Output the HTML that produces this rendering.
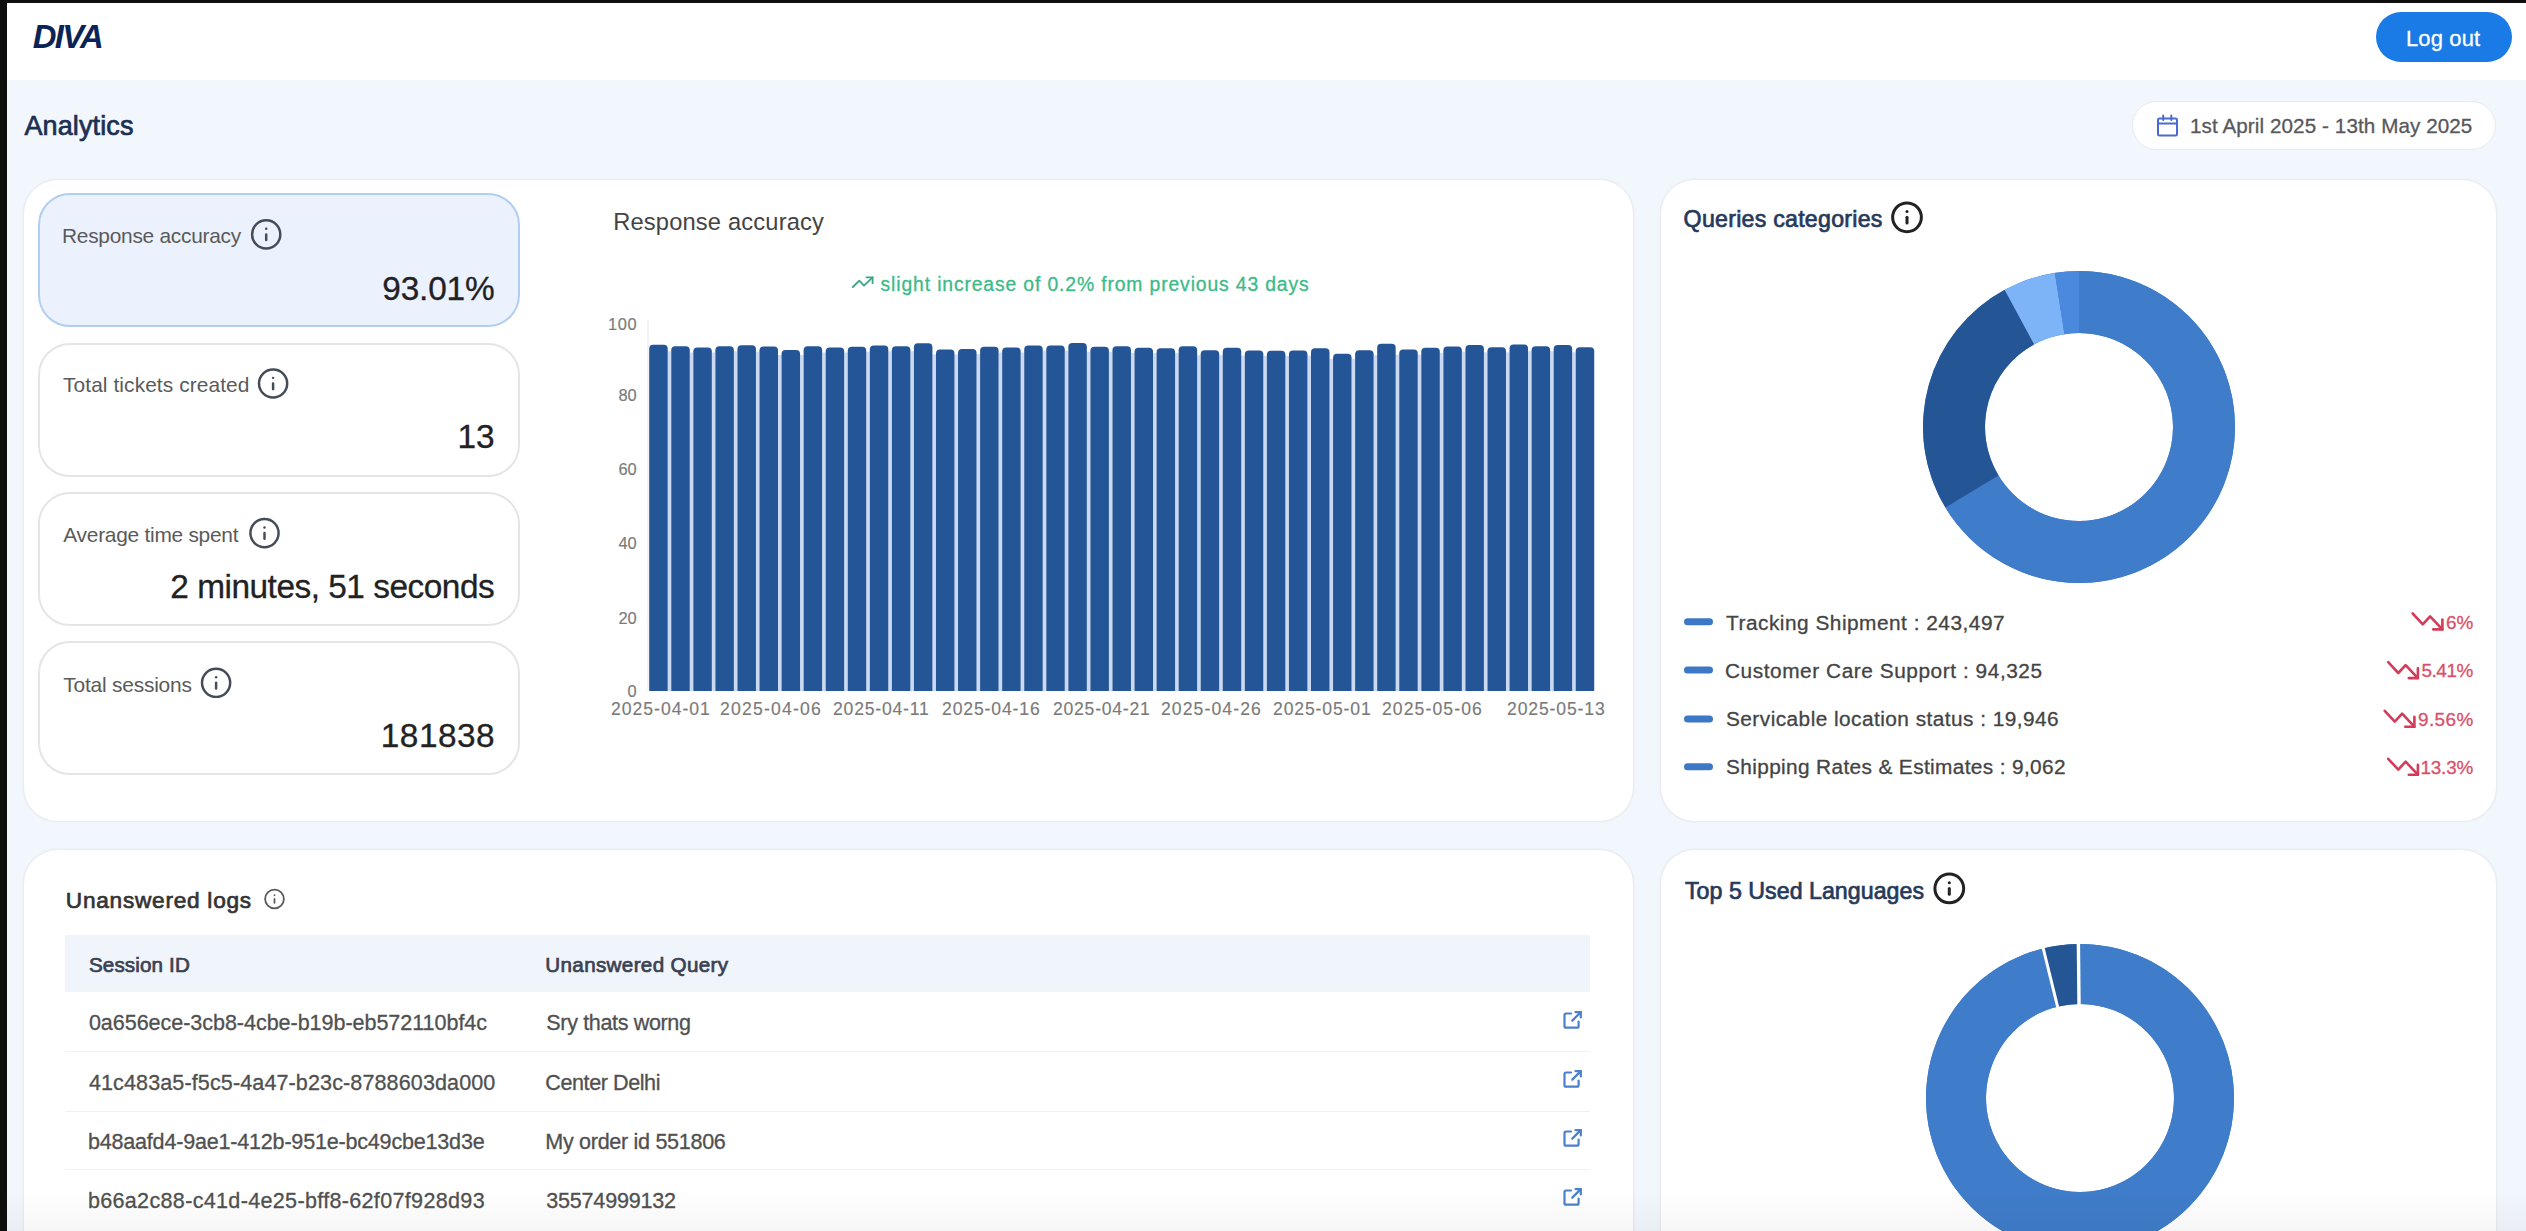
<!DOCTYPE html>
<html><head><meta charset="utf-8">
<style>
*{box-sizing:border-box;margin:0;padding:0}
html,body{width:2526px;height:1231px;overflow:hidden}
body{position:relative;background:#f2f6fd;font-family:"Liberation Sans",sans-serif;color:#333}
.abs{position:absolute}
.card{position:absolute;background:#fff;border:1px solid #e9ecf0;border-radius:35px;box-shadow:0 0 3px rgba(0,0,0,0.05)}
.metric{position:absolute;left:38px;width:482px;border:2px solid #e4e5e8;border-radius:32px;background:#fff}
.metric.sel{background:#ebf2fd;border-color:#b3cdf1}
svg{position:absolute;left:0;top:0}
svg text{font-family:"Liberation Sans",sans-serif}
</style></head><body>
<div class="abs" style="left:7px;top:3px;width:2519px;height:77px;background:#fff"></div>
<div class="abs" style="left:2376px;top:12px;width:136px;height:50px;border-radius:25px;background:#1a7ae6"></div>
<div class="abs" style="left:2132px;top:101px;width:364px;height:49px;border-radius:25px;background:#fff;border:1px solid #e6e9ee"></div>
<div class="card" style="left:23px;top:179px;width:1611px;height:643px"></div>
<div class="card" style="left:1660px;top:179px;width:837px;height:643px"></div>
<div class="card" style="left:23px;top:849px;width:1611px;height:420px"></div>
<div class="card" style="left:1660px;top:849px;width:837px;height:420px"></div>
<div class="metric sel" style="top:193px;height:134px"></div>
<div class="metric" style="top:343px;height:134px"></div>
<div class="metric" style="top:492px;height:134px"></div>
<div class="metric" style="top:641px;height:134px"></div>
<div class="abs" style="left:65px;top:935px;width:1525px;height:57px;background:#f0f4fb"></div>
<div class="abs" style="left:65px;top:1051px;width:1525px;height:1px;background:#eff1f4"></div>
<div class="abs" style="left:65px;top:1111px;width:1525px;height:1px;background:#eff1f4"></div>
<div class="abs" style="left:65px;top:1169px;width:1525px;height:1px;background:#eff1f4"></div>
<svg width="2526" height="1231" viewBox="0 0 2526 1231">
<line x1="648" y1="320" x2="648" y2="691" stroke="#e8e8e8" stroke-width="1"/>
<g fill="#cbdaf2">
<rect x="667.70" y="351.20" width="3.56" height="339.80"/>
<rect x="689.76" y="352.50" width="3.56" height="338.50"/>
<rect x="711.82" y="352.50" width="3.56" height="338.50"/>
<rect x="733.88" y="351.20" width="3.56" height="339.80"/>
<rect x="755.94" y="351.50" width="3.56" height="339.50"/>
<rect x="778.00" y="355.00" width="3.56" height="336.00"/>
<rect x="800.06" y="355.00" width="3.56" height="336.00"/>
<rect x="822.12" y="352.50" width="3.56" height="338.50"/>
<rect x="844.18" y="352.50" width="3.56" height="338.50"/>
<rect x="866.24" y="351.70" width="3.56" height="339.30"/>
<rect x="888.30" y="351.20" width="3.56" height="339.80"/>
<rect x="910.36" y="351.20" width="3.56" height="339.80"/>
<rect x="932.42" y="354.40" width="3.56" height="336.60"/>
<rect x="954.48" y="354.40" width="3.56" height="336.60"/>
<rect x="976.54" y="354.00" width="3.56" height="337.00"/>
<rect x="998.60" y="352.50" width="3.56" height="338.50"/>
<rect x="1020.66" y="352.50" width="3.56" height="338.50"/>
<rect x="1042.72" y="350.60" width="3.56" height="340.40"/>
<rect x="1064.78" y="350.60" width="3.56" height="340.40"/>
<rect x="1086.84" y="351.70" width="3.56" height="339.30"/>
<rect x="1108.90" y="351.70" width="3.56" height="339.30"/>
<rect x="1130.96" y="352.80" width="3.56" height="338.20"/>
<rect x="1153.02" y="353.20" width="3.56" height="337.80"/>
<rect x="1175.08" y="353.20" width="3.56" height="337.80"/>
<rect x="1197.14" y="355.20" width="3.56" height="335.80"/>
<rect x="1219.20" y="355.20" width="3.56" height="335.80"/>
<rect x="1241.26" y="355.60" width="3.56" height="335.40"/>
<rect x="1263.32" y="355.80" width="3.56" height="335.20"/>
<rect x="1285.38" y="355.80" width="3.56" height="335.20"/>
<rect x="1307.44" y="355.60" width="3.56" height="335.40"/>
<rect x="1329.50" y="358.80" width="3.56" height="332.20"/>
<rect x="1351.56" y="358.80" width="3.56" height="332.20"/>
<rect x="1373.62" y="355.20" width="3.56" height="335.80"/>
<rect x="1395.68" y="354.60" width="3.56" height="336.40"/>
<rect x="1417.74" y="354.60" width="3.56" height="336.40"/>
<rect x="1439.80" y="352.80" width="3.56" height="338.20"/>
<rect x="1461.86" y="351.60" width="3.56" height="339.40"/>
<rect x="1483.92" y="352.20" width="3.56" height="338.80"/>
<rect x="1505.98" y="352.20" width="3.56" height="338.80"/>
<rect x="1528.04" y="351.20" width="3.56" height="339.80"/>
<rect x="1550.10" y="351.20" width="3.56" height="339.80"/>
<rect x="1572.16" y="352.20" width="3.56" height="338.80"/>
</g>
<g fill="#245596">
<path d="M649.20 691 V348.80 Q649.20 344.80 653.20 344.80 H663.70 Q667.70 344.80 667.70 348.80 V691 Z"/>
<path d="M671.26 691 V350.20 Q671.26 346.20 675.26 346.20 H685.76 Q689.76 346.20 689.76 350.20 V691 Z"/>
<path d="M693.32 691 V351.50 Q693.32 347.50 697.32 347.50 H707.82 Q711.82 347.50 711.82 351.50 V691 Z"/>
<path d="M715.38 691 V350.20 Q715.38 346.20 719.38 346.20 H729.88 Q733.88 346.20 733.88 350.20 V691 Z"/>
<path d="M737.44 691 V349.20 Q737.44 345.20 741.44 345.20 H751.94 Q755.94 345.20 755.94 349.20 V691 Z"/>
<path d="M759.50 691 V350.50 Q759.50 346.50 763.50 346.50 H774.00 Q778.00 346.50 778.00 350.50 V691 Z"/>
<path d="M781.56 691 V354.00 Q781.56 350.00 785.56 350.00 H796.06 Q800.06 350.00 800.06 354.00 V691 Z"/>
<path d="M803.62 691 V350.20 Q803.62 346.20 807.62 346.20 H818.12 Q822.12 346.20 822.12 350.20 V691 Z"/>
<path d="M825.68 691 V351.50 Q825.68 347.50 829.68 347.50 H840.18 Q844.18 347.50 844.18 351.50 V691 Z"/>
<path d="M847.74 691 V350.70 Q847.74 346.70 851.74 346.70 H862.24 Q866.24 346.70 866.24 350.70 V691 Z"/>
<path d="M869.80 691 V349.60 Q869.80 345.60 873.80 345.60 H884.30 Q888.30 345.60 888.30 349.60 V691 Z"/>
<path d="M891.86 691 V350.20 Q891.86 346.20 895.86 346.20 H906.36 Q910.36 346.20 910.36 350.20 V691 Z"/>
<path d="M913.92 691 V347.30 Q913.92 343.30 917.92 343.30 H928.42 Q932.42 343.30 932.42 347.30 V691 Z"/>
<path d="M935.98 691 V353.40 Q935.98 349.40 939.98 349.40 H950.48 Q954.48 349.40 954.48 353.40 V691 Z"/>
<path d="M958.04 691 V353.00 Q958.04 349.00 962.04 349.00 H972.54 Q976.54 349.00 976.54 353.00 V691 Z"/>
<path d="M980.10 691 V350.70 Q980.10 346.70 984.10 346.70 H994.60 Q998.60 346.70 998.60 350.70 V691 Z"/>
<path d="M1002.16 691 V351.50 Q1002.16 347.50 1006.16 347.50 H1016.66 Q1020.66 347.50 1020.66 351.50 V691 Z"/>
<path d="M1024.22 691 V349.60 Q1024.22 345.60 1028.22 345.60 H1038.72 Q1042.72 345.60 1042.72 349.60 V691 Z"/>
<path d="M1046.28 691 V349.60 Q1046.28 345.60 1050.28 345.60 H1060.78 Q1064.78 345.60 1064.78 349.60 V691 Z"/>
<path d="M1068.34 691 V346.90 Q1068.34 342.90 1072.34 342.90 H1082.84 Q1086.84 342.90 1086.84 346.90 V691 Z"/>
<path d="M1090.40 691 V350.70 Q1090.40 346.70 1094.40 346.70 H1104.90 Q1108.90 346.70 1108.90 350.70 V691 Z"/>
<path d="M1112.46 691 V350.20 Q1112.46 346.20 1116.46 346.20 H1126.96 Q1130.96 346.20 1130.96 350.20 V691 Z"/>
<path d="M1134.52 691 V351.80 Q1134.52 347.80 1138.52 347.80 H1149.02 Q1153.02 347.80 1153.02 351.80 V691 Z"/>
<path d="M1156.58 691 V352.20 Q1156.58 348.20 1160.58 348.20 H1171.08 Q1175.08 348.20 1175.08 352.20 V691 Z"/>
<path d="M1178.64 691 V350.20 Q1178.64 346.20 1182.64 346.20 H1193.14 Q1197.14 346.20 1197.14 350.20 V691 Z"/>
<path d="M1200.70 691 V354.20 Q1200.70 350.20 1204.70 350.20 H1215.20 Q1219.20 350.20 1219.20 354.20 V691 Z"/>
<path d="M1222.76 691 V351.80 Q1222.76 347.80 1226.76 347.80 H1237.26 Q1241.26 347.80 1241.26 351.80 V691 Z"/>
<path d="M1244.82 691 V354.60 Q1244.82 350.60 1248.82 350.60 H1259.32 Q1263.32 350.60 1263.32 354.60 V691 Z"/>
<path d="M1266.88 691 V354.80 Q1266.88 350.80 1270.88 350.80 H1281.38 Q1285.38 350.80 1285.38 354.80 V691 Z"/>
<path d="M1288.94 691 V354.60 Q1288.94 350.60 1292.94 350.60 H1303.44 Q1307.44 350.60 1307.44 354.60 V691 Z"/>
<path d="M1311.00 691 V352.20 Q1311.00 348.20 1315.00 348.20 H1325.50 Q1329.50 348.20 1329.50 352.20 V691 Z"/>
<path d="M1333.06 691 V357.80 Q1333.06 353.80 1337.06 353.80 H1347.56 Q1351.56 353.80 1351.56 357.80 V691 Z"/>
<path d="M1355.12 691 V354.20 Q1355.12 350.20 1359.12 350.20 H1369.62 Q1373.62 350.20 1373.62 354.20 V691 Z"/>
<path d="M1377.18 691 V347.70 Q1377.18 343.70 1381.18 343.70 H1391.68 Q1395.68 343.70 1395.68 347.70 V691 Z"/>
<path d="M1399.24 691 V353.60 Q1399.24 349.60 1403.24 349.60 H1413.74 Q1417.74 349.60 1417.74 353.60 V691 Z"/>
<path d="M1421.30 691 V351.80 Q1421.30 347.80 1425.30 347.80 H1435.80 Q1439.80 347.80 1439.80 351.80 V691 Z"/>
<path d="M1443.36 691 V350.60 Q1443.36 346.60 1447.36 346.60 H1457.86 Q1461.86 346.60 1461.86 350.60 V691 Z"/>
<path d="M1465.42 691 V349.10 Q1465.42 345.10 1469.42 345.10 H1479.92 Q1483.92 345.10 1483.92 349.10 V691 Z"/>
<path d="M1487.48 691 V351.20 Q1487.48 347.20 1491.48 347.20 H1501.98 Q1505.98 347.20 1505.98 351.20 V691 Z"/>
<path d="M1509.54 691 V348.50 Q1509.54 344.50 1513.54 344.50 H1524.04 Q1528.04 344.50 1528.04 348.50 V691 Z"/>
<path d="M1531.60 691 V350.20 Q1531.60 346.20 1535.60 346.20 H1546.10 Q1550.10 346.20 1550.10 350.20 V691 Z"/>
<path d="M1553.66 691 V349.10 Q1553.66 345.10 1557.66 345.10 H1568.16 Q1572.16 345.10 1572.16 349.10 V691 Z"/>
<path d="M1575.72 691 V351.20 Q1575.72 347.20 1579.72 347.20 H1590.22 Q1594.22 347.20 1594.22 351.20 V691 Z"/>
</g>
<circle cx="2079" cy="427" r="125" fill="none" stroke="#3f7cc9" stroke-width="62"/>
<path fill="#3f7cc9" d="M2079.00 271.00 A156 156 0 1 1 1945.33 507.43 L1998.46 475.47 A94 94 0 1 0 2079.00 333.00 Z"/>
<path fill="#245594" d="M1945.33 507.43 A156 156 0 0 1 2004.64 289.86 L2034.19 344.37 A94 94 0 0 0 1998.46 475.47 Z"/>
<path fill="#7db4f8" d="M2004.64 289.86 A156 156 0 0 1 2054.88 272.88 L2064.47 334.13 A94 94 0 0 0 2034.19 344.37 Z"/>
<path fill="#4a89de" d="M2054.88 272.88 A156 156 0 0 1 2079.00 271.00 L2079.00 333.00 A94 94 0 0 0 2064.47 334.13 Z"/>
<circle cx="2080" cy="1098" r="124" fill="none" stroke="#3f7cc9" stroke-width="60"/>
<path fill="#3f7cc9" d="M2080.00 944.00 A154 154 0 1 1 2042.74 948.57 L2057.26 1006.79 A94 94 0 1 0 2080.00 1004.00 Z"/>
<path fill="#245594" d="M2042.74 948.57 A154 154 0 0 1 2078.66 944.01 L2079.18 1004.00 A94 94 0 0 0 2057.26 1006.79 Z"/>
<line x1="2058.05" y1="1008.66" x2="2042.79" y2="946.50" stroke="#fff" stroke-width="3.0"/>
<line x1="2079.04" y1="1006.01" x2="2078.37" y2="942.01" stroke="#fff" stroke-width="3.4"/>
<g transform="translate(249.30 217.50) scale(1.4083)" fill="none" stroke="#454c58" stroke-width="1.75" stroke-linecap="round" stroke-linejoin="round"><circle cx="12" cy="12" r="10"/><path d="M12 16v-4"/><path d="M12 8h.01"/></g>
<g transform="translate(256.20 366.60) scale(1.4083)" fill="none" stroke="#454c58" stroke-width="1.75" stroke-linecap="round" stroke-linejoin="round"><circle cx="12" cy="12" r="10"/><path d="M12 16v-4"/><path d="M12 8h.01"/></g>
<g transform="translate(247.60 516.20) scale(1.4083)" fill="none" stroke="#454c58" stroke-width="1.75" stroke-linecap="round" stroke-linejoin="round"><circle cx="12" cy="12" r="10"/><path d="M12 16v-4"/><path d="M12 8h.01"/></g>
<g transform="translate(199.20 665.90) scale(1.4083)" fill="none" stroke="#454c58" stroke-width="1.75" stroke-linecap="round" stroke-linejoin="round"><circle cx="12" cy="12" r="10"/><path d="M12 16v-4"/><path d="M12 8h.01"/></g>
<g transform="translate(1889.75 200.05) scale(1.4375)" fill="none" stroke="#222" stroke-width="2.1" stroke-linecap="round" stroke-linejoin="round"><circle cx="12" cy="12" r="10"/><path d="M12 16v-4"/><path d="M12 8h.01"/></g>
<g transform="translate(1932.05 871.15) scale(1.4375)" fill="none" stroke="#222" stroke-width="2.1" stroke-linecap="round" stroke-linejoin="round"><circle cx="12" cy="12" r="10"/><path d="M12 16v-4"/><path d="M12 8h.01"/></g>
<g transform="translate(263.25 887.75) scale(0.9375)" fill="none" stroke="#5a5a5a" stroke-width="1.9" stroke-linecap="round" stroke-linejoin="round"><circle cx="12" cy="12" r="10"/><path d="M12 16v-4"/><path d="M12 8h.01"/></g>
<g fill="none" stroke="#4b6bd0" stroke-width="2" stroke-linecap="round"><rect x="2158" y="118.4" width="19" height="17" rx="1.5"/><line x1="2158" y1="123.6" x2="2177" y2="123.6"/><line x1="2163.2" y1="115.5" x2="2163.2" y2="120"/><line x1="2171.3" y1="115.5" x2="2171.3" y2="120"/></g>
<g fill="none" stroke="#3fa581" stroke-width="1.8" stroke-linecap="round" stroke-linejoin="round"><polyline points="852.8,287 859.3,280.6 864,285.6 872.6,277.3"/><polyline points="866.4,277.3 872.6,277.3 872.6,283.2"/></g>
<g fill="none" stroke="#d23c5a" stroke-width="2.6" stroke-linecap="round" stroke-linejoin="round"><polyline points="2412.7,613.5 2422.8,624.3 2430.1,616.4 2442.4,629.4"/><polyline points="2433.3,629.4 2442.4,629.4 2442.4,619.6"/></g>
<g fill="none" stroke="#d23c5a" stroke-width="2.6" stroke-linecap="round" stroke-linejoin="round"><polyline points="2388.2,662.2 2398.3,673.0 2405.6,665.1 2417.9,678.1"/><polyline points="2408.8,678.1 2417.9,678.1 2417.9,668.3"/></g>
<g fill="none" stroke="#d23c5a" stroke-width="2.6" stroke-linecap="round" stroke-linejoin="round"><polyline points="2384.7,710.8 2394.8,721.6 2402.1,713.7 2414.4,726.7"/><polyline points="2405.3,726.7 2414.4,726.7 2414.4,716.9"/></g>
<g fill="none" stroke="#d23c5a" stroke-width="2.6" stroke-linecap="round" stroke-linejoin="round"><polyline points="2388.2,758.8 2398.3,769.6 2405.6,761.7 2417.9,774.7"/><polyline points="2408.8,774.7 2417.9,774.7 2417.9,764.9"/></g>
<line x1="1687.5" y1="621.7" x2="1709.5" y2="621.7" stroke="#3d78c6" stroke-width="7" stroke-linecap="round"/>
<line x1="1687.5" y1="670" x2="1709.5" y2="670" stroke="#3d78c6" stroke-width="7" stroke-linecap="round"/>
<line x1="1687.5" y1="719" x2="1709.5" y2="719" stroke="#3d78c6" stroke-width="7" stroke-linecap="round"/>
<line x1="1687.5" y1="766.8" x2="1709.5" y2="766.8" stroke="#3d78c6" stroke-width="7" stroke-linecap="round"/>
<g fill="none" stroke="#4a80cc" stroke-width="2.2" stroke-linecap="round" stroke-linejoin="round"><path d="M1571.0 1013.5 H1566.0 Q1564.5 1013.5 1564.5 1015.0 V1026.2 Q1564.5 1027.7 1566.0 1027.7 H1577.1 Q1578.6 1027.7 1578.6 1026.2 V1021.5"/><path d="M1572.3 1020.6 L1580.8 1012.1"/><path d="M1575.5 1012.1 H1580.8 V1017.4"/></g>
<g fill="none" stroke="#4a80cc" stroke-width="2.2" stroke-linecap="round" stroke-linejoin="round"><path d="M1571.0 1072.5 H1566.0 Q1564.5 1072.5 1564.5 1074.0 V1085.2 Q1564.5 1086.7 1566.0 1086.7 H1577.1 Q1578.6 1086.7 1578.6 1085.2 V1080.5"/><path d="M1572.3 1079.6 L1580.8 1071.1"/><path d="M1575.5 1071.1 H1580.8 V1076.4"/></g>
<g fill="none" stroke="#4a80cc" stroke-width="2.2" stroke-linecap="round" stroke-linejoin="round"><path d="M1571.0 1131.5 H1566.0 Q1564.5 1131.5 1564.5 1133.0 V1144.2 Q1564.5 1145.7 1566.0 1145.7 H1577.1 Q1578.6 1145.7 1578.6 1144.2 V1139.5"/><path d="M1572.3 1138.6 L1580.8 1130.1"/><path d="M1575.5 1130.1 H1580.8 V1135.4"/></g>
<g fill="none" stroke="#4a80cc" stroke-width="2.2" stroke-linecap="round" stroke-linejoin="round"><path d="M1571.0 1190.5 H1566.0 Q1564.5 1190.5 1564.5 1192.0 V1203.2 Q1564.5 1204.7 1566.0 1204.7 H1577.1 Q1578.6 1204.7 1578.6 1203.2 V1198.5"/><path d="M1572.3 1197.6 L1580.8 1189.1"/><path d="M1575.5 1189.1 H1580.8 V1194.4"/></g>
<text x="32.70" y="47.90" fill="#0b2458" style="font-size:32.85px;font-weight:bold;font-style:italic;letter-spacing:-1.629px;">DIVA</text>
<text x="2406.00" y="45.50" fill="#ffffff" stroke="#ffffff" stroke-width="0.3" style="font-size:21.95px;letter-spacing:0.150px;">Log out</text>
<text x="24.40" y="135.00" fill="#1b2f52" stroke="#1b2f52" stroke-width="0.7" style="font-size:27.03px;letter-spacing:0.126px;">Analytics</text>
<text x="2190.00" y="133.20" fill="#58585c" stroke="#58585c" stroke-width="0.3" style="font-size:20.64px;letter-spacing:0.089px;">1st April 2025 - 13th May 2025</text>
<text x="62.00" y="243.00" fill="#5a5a5a" style="font-size:20.90px;letter-spacing:-0.270px;">Response accuracy</text>
<text x="63.00" y="392.10" fill="#5a5a5a" style="font-size:20.90px;letter-spacing:0.090px;">Total tickets created</text>
<text x="63.30" y="541.70" fill="#5a5a5a" style="font-size:20.90px;letter-spacing:-0.259px;">Average time spent</text>
<text x="63.30" y="691.50" fill="#5a5a5a" style="font-size:20.90px;letter-spacing:-0.205px;">Total sessions</text>
<text x="382.30" y="299.70" fill="#222222" stroke="#222222" stroke-width="0.3" style="font-size:33.40px;letter-spacing:-0.172px;">93.01%</text>
<text x="457.60" y="448.30" fill="#222222" stroke="#222222" stroke-width="0.3" style="font-size:33.40px;letter-spacing:-0.170px;">13</text>
<text x="170.30" y="597.90" fill="#222222" stroke="#222222" stroke-width="0.3" style="font-size:33.40px;letter-spacing:-0.485px;">2 minutes, 51 seconds</text>
<text x="380.80" y="747.00" fill="#222222" stroke="#222222" stroke-width="0.3" style="font-size:33.40px;letter-spacing:0.470px;">181838</text>
<text x="613.20" y="229.80" fill="#444444" style="font-size:23.69px;letter-spacing:0.170px;">Response accuracy</text>
<text x="880.60" y="290.70" fill="#3dba88" stroke="#3dba88" stroke-width="0.3" style="font-size:19.33px;letter-spacing:0.866px;">slight increase of 0.2% from previous 43 days</text>
<text x="607.90" y="330.00" fill="#7a7a7a" stroke="#7a7a7a" stroke-width="0.15" style="font-size:16.42px;letter-spacing:0.726px;">100</text>
<text x="1683.60" y="226.70" fill="#26395a" stroke="#26395a" stroke-width="0.7" style="font-size:23.20px;letter-spacing:0.246px;">Queries categories</text>
<text x="1726.00" y="629.70" fill="#444444" stroke="#444444" stroke-width="0.3" style="font-size:20.82px;letter-spacing:0.510px;">Tracking Shipment : 243,497</text>
<text x="1725.00" y="678.00" fill="#444444" stroke="#444444" stroke-width="0.3" style="font-size:20.82px;letter-spacing:0.562px;">Customer Care Support : 94,325</text>
<text x="1726.00" y="726.20" fill="#444444" stroke="#444444" stroke-width="0.3" style="font-size:20.82px;letter-spacing:0.458px;">Servicable location status : 19,946</text>
<text x="1726.00" y="774.30" fill="#444444" stroke="#444444" stroke-width="0.3" style="font-size:20.82px;letter-spacing:0.369px;">Shipping Rates &amp; Estimates : 9,062</text>
<text x="2445.90" y="629.00" fill="#d9506a" stroke="#d9506a" stroke-width="0.3" style="font-size:18.90px;letter-spacing:0.094px;">6%</text>
<text x="2421.40" y="677.00" fill="#d9506a" stroke="#d9506a" stroke-width="0.3" style="font-size:18.90px;letter-spacing:-0.417px;">5.41%</text>
<text x="2418.00" y="725.60" fill="#d9506a" stroke="#d9506a" stroke-width="0.3" style="font-size:18.90px;letter-spacing:0.433px;">9.56%</text>
<text x="2420.40" y="773.90" fill="#d9506a" stroke="#d9506a" stroke-width="0.3" style="font-size:18.90px;letter-spacing:-0.167px;">13.3%</text>
<text x="65.80" y="908.00" fill="#333333" stroke="#333333" stroke-width="0.7" style="font-size:22.67px;letter-spacing:0.734px;">Unanswered logs</text>
<text x="88.90" y="972.30" fill="#3a4150" stroke="#3a4150" stroke-width="0.7" style="font-size:20.64px;letter-spacing:0.129px;">Session ID</text>
<text x="545.30" y="972.30" fill="#3a4150" stroke="#3a4150" stroke-width="0.7" style="font-size:20.64px;letter-spacing:0.335px;">Unanswered Query</text>
<text x="88.90" y="1030.30" fill="#505050" stroke="#505050" stroke-width="0.3" style="font-size:21.55px;letter-spacing:-0.045px;">0a656ece-3cb8-4cbe-b19b-eb572110bf4c</text>
<text x="546.30" y="1030.30" fill="#505050" stroke="#505050" stroke-width="0.3" style="font-size:21.55px;letter-spacing:-0.358px;">Sry thats worng</text>
<text x="88.90" y="1089.60" fill="#505050" stroke="#505050" stroke-width="0.3" style="font-size:21.55px;letter-spacing:0.112px;">41c483a5-f5c5-4a47-b23c-8788603da000</text>
<text x="545.30" y="1089.60" fill="#505050" stroke="#505050" stroke-width="0.3" style="font-size:21.55px;letter-spacing:-0.417px;">Center Delhi</text>
<text x="87.90" y="1148.60" fill="#505050" stroke="#505050" stroke-width="0.3" style="font-size:21.55px;letter-spacing:-0.200px;">b48aafd4-9ae1-412b-951e-bc49cbe13d3e</text>
<text x="545.30" y="1148.60" fill="#505050" stroke="#505050" stroke-width="0.3" style="font-size:21.55px;letter-spacing:-0.303px;">My order id 551806</text>
<text x="87.90" y="1207.80" fill="#505050" stroke="#505050" stroke-width="0.3" style="font-size:21.55px;letter-spacing:0.325px;">b66a2c88-c41d-4e25-bff8-62f07f928d93</text>
<text x="546.30" y="1207.80" fill="#505050" stroke="#505050" stroke-width="0.3" style="font-size:21.55px;letter-spacing:-0.215px;">35574999132</text>
<text x="1685.00" y="899.00" fill="#26395a" stroke="#26395a" stroke-width="0.7" style="font-size:23.20px;letter-spacing:0.026px;">Top 5 Used Languages</text>
<text x="618.48" y="400.85" fill="#7a7a7a" stroke="#7a7a7a" stroke-width="0.15" style="font-size:16.42px;">80</text>
<text x="618.48" y="474.65" fill="#7a7a7a" stroke="#7a7a7a" stroke-width="0.15" style="font-size:16.42px;">60</text>
<text x="618.48" y="549.25" fill="#7a7a7a" stroke="#7a7a7a" stroke-width="0.15" style="font-size:16.42px;">40</text>
<text x="618.48" y="624.45" fill="#7a7a7a" stroke="#7a7a7a" stroke-width="0.15" style="font-size:16.42px;">20</text>
<text x="627.60" y="697.35" fill="#7a7a7a" stroke="#7a7a7a" stroke-width="0.15" style="font-size:16.42px;">0</text>
<text x="611.00" y="714.50" fill="#7a7a7a" stroke="#7a7a7a" stroke-width="0.15" style="font-size:17.59px;letter-spacing:0.984px;">2025-04-01</text>
<text x="720.00" y="714.50" fill="#7a7a7a" stroke="#7a7a7a" stroke-width="0.15" style="font-size:17.59px;letter-spacing:1.207px;">2025-04-06</text>
<text x="833.00" y="714.50" fill="#7a7a7a" stroke="#7a7a7a" stroke-width="0.15" style="font-size:17.59px;letter-spacing:0.796px;">2025-04-11</text>
<text x="942.00" y="714.50" fill="#7a7a7a" stroke="#7a7a7a" stroke-width="0.15" style="font-size:17.59px;letter-spacing:0.873px;">2025-04-16</text>
<text x="1053.00" y="714.50" fill="#7a7a7a" stroke="#7a7a7a" stroke-width="0.15" style="font-size:17.59px;letter-spacing:0.762px;">2025-04-21</text>
<text x="1161.00" y="714.50" fill="#7a7a7a" stroke="#7a7a7a" stroke-width="0.15" style="font-size:17.59px;letter-spacing:1.096px;">2025-04-26</text>
<text x="1273.00" y="714.50" fill="#7a7a7a" stroke="#7a7a7a" stroke-width="0.15" style="font-size:17.59px;letter-spacing:0.873px;">2025-05-01</text>
<text x="1382.00" y="714.50" fill="#7a7a7a" stroke="#7a7a7a" stroke-width="0.15" style="font-size:17.59px;letter-spacing:1.096px;">2025-05-06</text>
<text x="1507.00" y="714.50" fill="#7a7a7a" stroke="#7a7a7a" stroke-width="0.15" style="font-size:17.59px;letter-spacing:0.873px;">2025-05-13</text>
</svg>
<div class="abs" style="left:0;top:1190px;width:2526px;height:41px;background:linear-gradient(to bottom,rgba(0,0,0,0),rgba(0,0,0,0.035))"></div>
<div class="abs" style="left:0;top:0;width:2526px;height:3px;background:#0e0e0e"></div>
<div class="abs" style="left:0;top:0;width:7px;height:1231px;background:#0e0e0e"></div>
</body></html>
